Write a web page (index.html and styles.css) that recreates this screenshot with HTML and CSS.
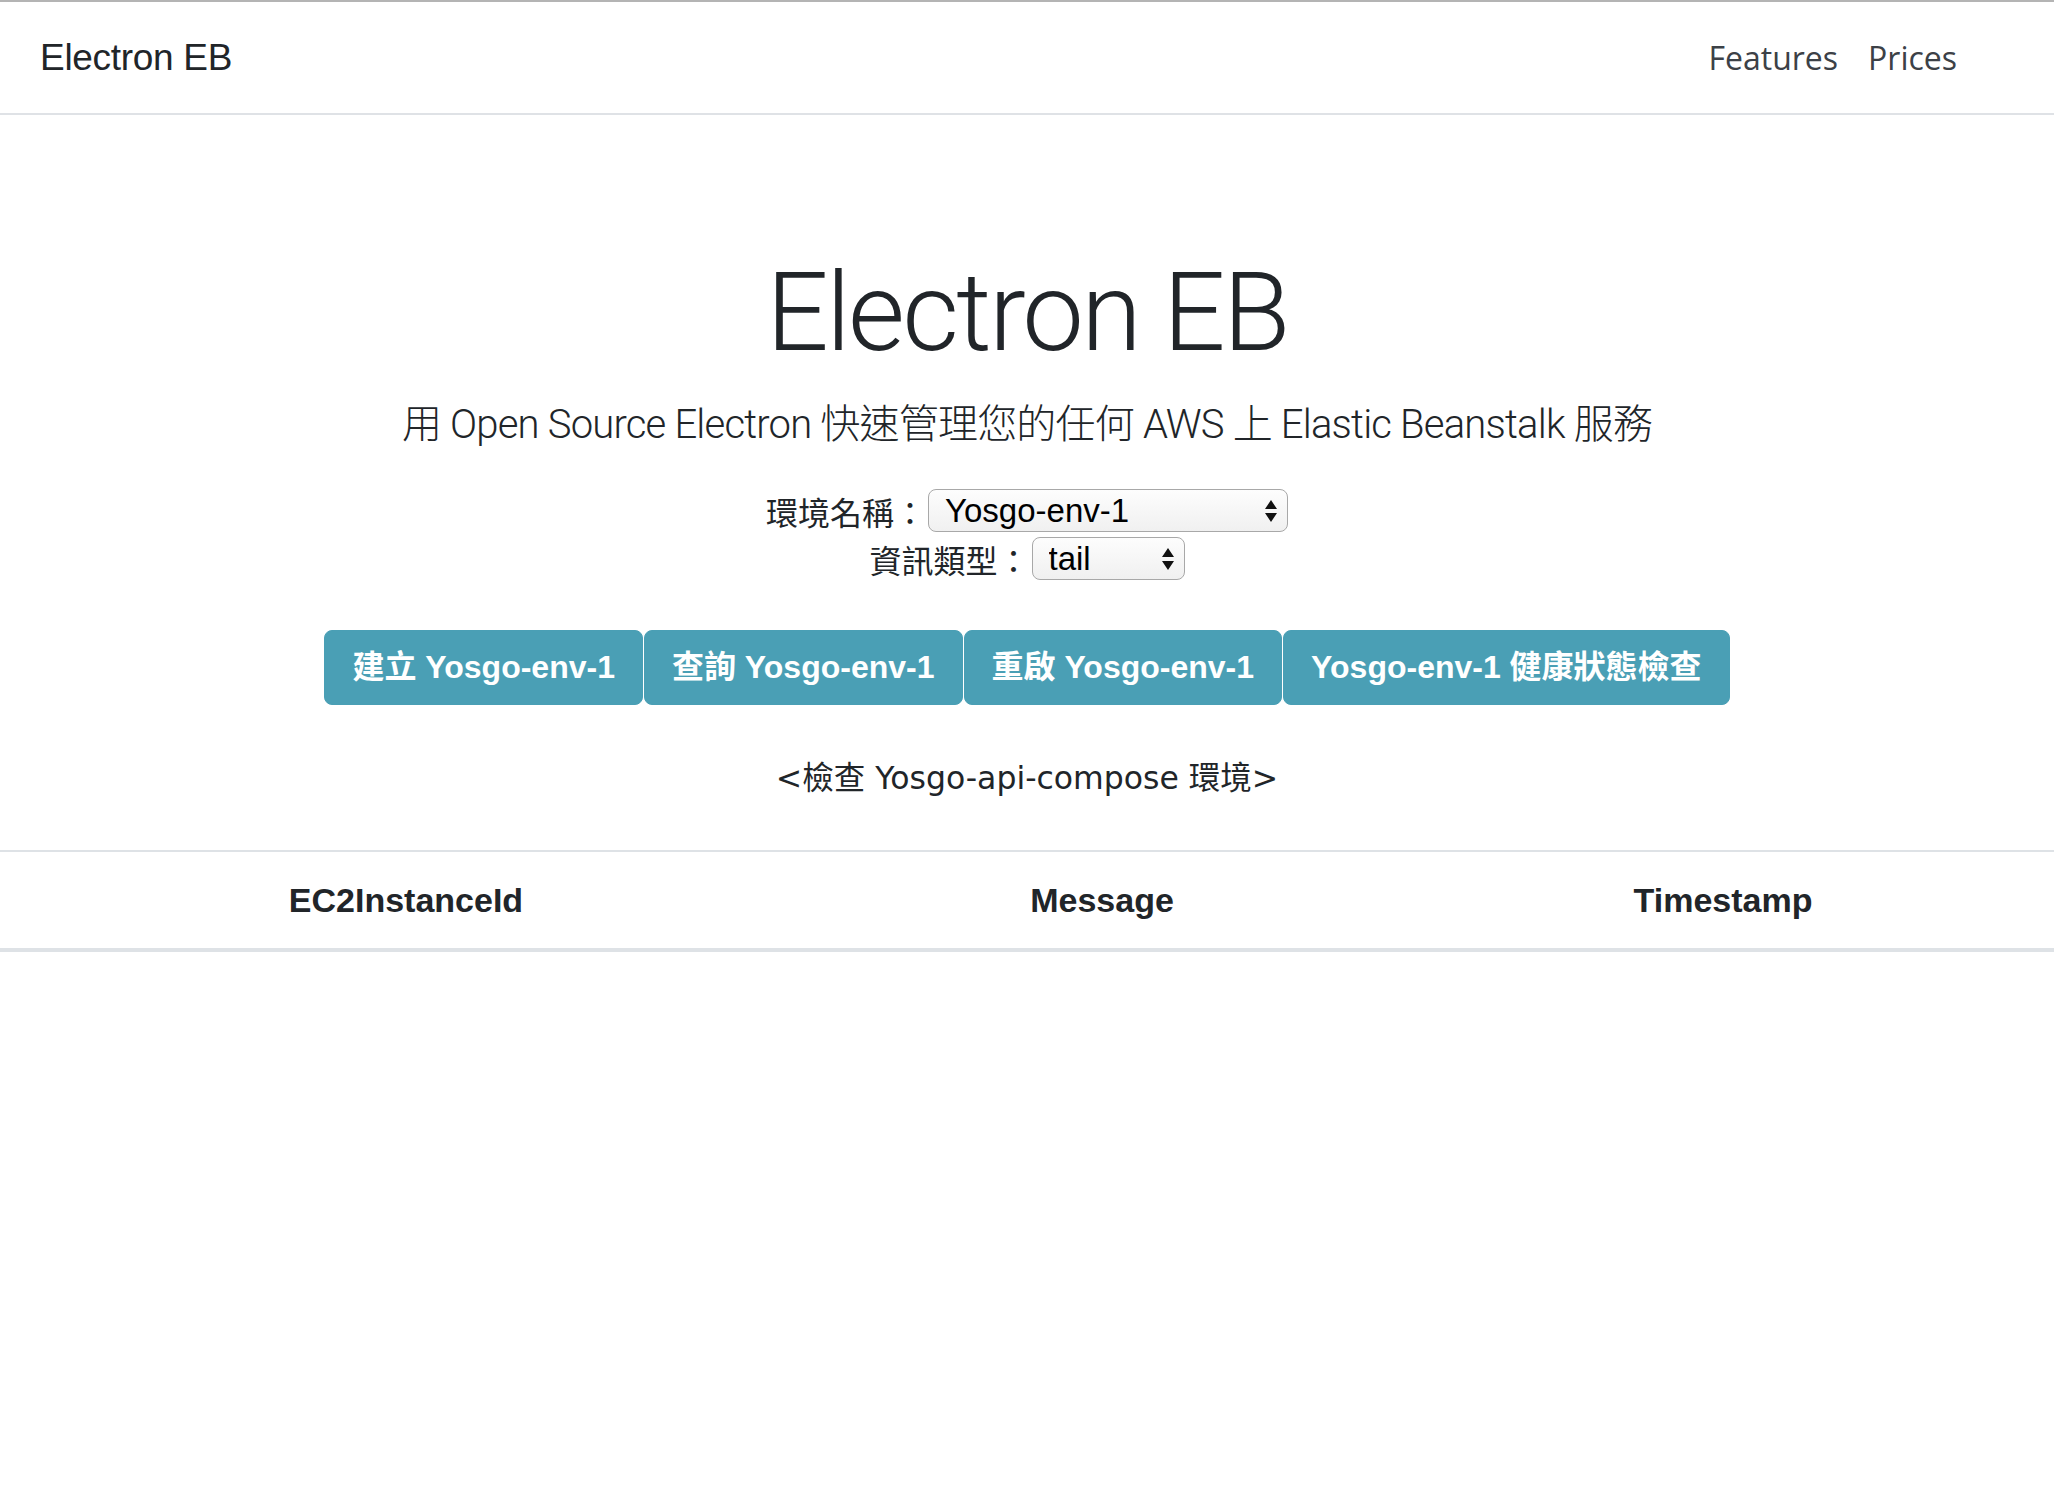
FILE: index.html
```html
<!DOCTYPE html>
<html lang="zh-Hant">
<head>
    <meta charset="UTF-8">
    <meta name="viewport" content="width=device-width, initial-scale=1.0">
    <title>Electron EB</title>
    <link rel="stylesheet" href="styles.css">
</head>
<body>

    <!-- Top Navbar -->
    <nav class="navbar">
        <a class="brand" href="#">Electron EB</a>
        <ul class="nav-links">
            <li><a href="#">Features</a></li>
            <li><a href="#">Prices</a></li>
        </ul>
    </nav>

    <!-- Hero Section -->
    <main class="hero">
        <h1 class="title">Electron EB</h1>
        <p class="lead">用 Open Source Electron 快速管理您的任何 AWS 上 Elastic Beanstalk 服務</p>

        <div class="form-row">
            <label for="envName">環境名稱：</label>
            <span class="select-wrap wide">
                <select id="envName">
                    <option>Yosgo-env-1</option>
                    <option>Yosgo-api-compose</option>
                </select>
                <svg class="arrows" width="14" height="26" viewBox="0 0 14 26"><path d="M7 2 L13 11 L1 11 Z M1 15 L13 15 L7 24 Z" fill="#111"/></svg>
            </span>
        </div>
        <div class="form-row">
            <label for="infoType">資訊類型：</label>
            <span class="select-wrap narrow">
                <select id="infoType">
                    <option>tail</option>
                    <option>bundle</option>
                </select>
                <svg class="arrows" width="14" height="26" viewBox="0 0 14 26"><path d="M7 2 L13 11 L1 11 Z M1 15 L13 15 L7 24 Z" fill="#111"/></svg>
            </span>
        </div>

        <!-- Action Buttons -->
        <div class="actions">
            <button class="btn">建立 Yosgo-env-1</button>
            <button class="btn">查詢 Yosgo-env-1</button>
            <button class="btn">重啟 Yosgo-env-1</button>
            <button class="btn">Yosgo-env-1 健康狀態檢查</button>
        </div>

        <p class="status" id="status">&lt;檢查 Yosgo-api-compose 環境&gt;</p>
    </main>

    <!-- Event Log Table -->
    <table class="log-table">
        <thead>
            <tr>
                <th class="col-id">EC2InstanceId</th>
                <th class="col-msg">Message</th>
                <th class="col-time">Timestamp</th>
            </tr>
        </thead>
        <tbody id="logBody"></tbody>
    </table>

</body>
</html>
```

FILE: styles.css
```css
body {
    margin: 0;
    font-family: "Liberation Sans", "Noto Sans CJK TC", sans-serif;
    color: #212529;
    background: #fff;
}
/* Navbar */
.navbar {
    display: flex;
    justify-content: space-between;
    align-items: center;
    height: 111px;
    padding: 0 81px 0 40px;
    border-top: 2px solid #b4b4b4;
    border-bottom: 2px solid #dfe2e6;
}
.brand {
    font-size: 37px;
    letter-spacing: -0.3px;
    color: #212529;
    text-decoration: none;
}
.nav-links {
    display: flex;
    list-style: none;
    margin: 0;
    padding: 0;
}
.nav-links a {
    display: block;
    padding: 0 15px;
    font-family: "Open Sans", sans-serif;
    font-size: 32px;
    color: #3c4147;
    text-decoration: none;
}
.nav-links li:last-child a {
    padding-right: 16px;
}
/* Hero */
.hero {
    padding-top: 132px;
    text-align: center;
}
.title {
    margin: 0;
    font-family: Roboto, "Liberation Sans", sans-serif;
    font-weight: 300;
    font-size: 110px;
    line-height: 132px;
    letter-spacing: -2.7px;
}
.lead {
    margin: 16px 0 0;
    font-family: Roboto, "Noto Sans CJK TC", sans-serif;
    font-weight: 300;
    font-size: 40px;
    line-height: 60px;
    letter-spacing: -0.8px;
}
/* Selects */
.form-row {
    display: flex;
    justify-content: center;
    align-items: center;
    height: 43px;
    margin-bottom: 5px;
}
.form-row:first-of-type {
    margin-top: 34px;
}
.form-row label {
    font-family: "Noto Sans CJK TC", sans-serif;
    font-size: 32px;
    margin-right: 2px;
}
.select-wrap {
    position: relative;
    display: inline-block;
}
.select-wrap select {
    appearance: none;
    -webkit-appearance: none;
    box-sizing: border-box;
    height: 43px;
    padding: 0 40px 0 16px;
    border: 1px solid #a8a8a8;
    border-radius: 8px;
    background: linear-gradient(#fdfdfd, #f0f0f0);
    font-family: "Liberation Sans", sans-serif;
    font-size: 33px;
    color: #000;
}
.select-wrap.wide select {
    width: 360px;
}
.select-wrap.narrow select {
    width: 153px;
}
.arrows {
    position: absolute;
    right: 10px;
    top: 9px;
    pointer-events: none;
}
/* Buttons */
.actions {
    display: flex;
    justify-content: center;
    gap: 1px;
    margin-top: 50px;
}
.btn {
    padding: 13px 27px;
    border: 1px solid #4a9fb5;
    border-radius: 8px;
    background-color: #4a9fb5;
    color: #fff;
    font-family: "Liberation Sans", "Noto Sans CJK TC", sans-serif;
    font-weight: 700;
    font-size: 32px;
    line-height: 47px;
    cursor: pointer;
}
.status {
    margin: 49px 0 0;
    font-family: "DejaVu Sans", "Noto Sans CJK TC", sans-serif;
    font-size: 31.5px;
    line-height: 48px;
}
/* Table */
.log-table {
    width: 100%;
    margin-top: 48px;
    border-collapse: separate;
    border-spacing: 0;
}
.log-table th {
    box-sizing: border-box;
    padding: 24px;
    border-top: 2px solid #dee2e6;
    border-bottom: 4px solid #dee2e6;
    font-size: 34px;
    line-height: 48px;
    font-weight: 700;
    text-align: center;
}
.col-id {
    width: 812px;
}
.col-msg {
    width: 580px;
}
```
